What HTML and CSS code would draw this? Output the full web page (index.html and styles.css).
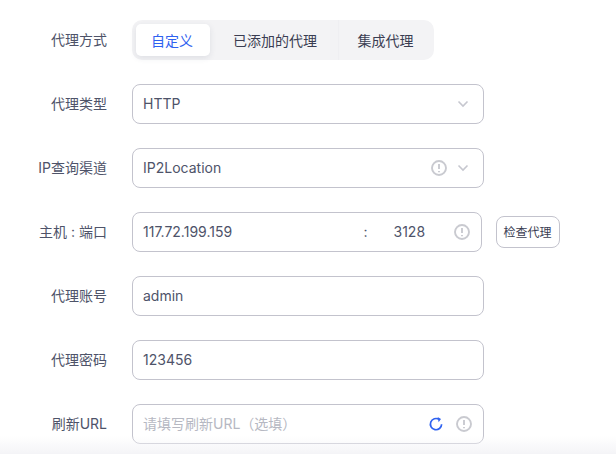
FILE: index.html
```html
<!DOCTYPE html>
<html lang="zh">
<head>
<meta charset="utf-8">
<title>代理设置</title>
<link rel="stylesheet" href="styles.css">
</head>
<body>
<form class="form">
  <div class="row">
    <span class="label">代理方式</span>
    <div class="tabs">
      <span class="tab tab-active">自定义</span>
      <span class="tab tab-wide">已添加的代理</span>
      <span class="tab tab-last">集成代理</span>
    </div>
  </div>
  <div class="row">
    <span class="label">代理类型</span>
    <div class="field"><span class="value">HTTP</span>
      <svg class="chevron" viewBox="0 0 12 8"><path d="M1.5 1.5 6 6l4.5-4.5"/></svg>
    </div>
  </div>
  <div class="row">
    <span class="label">IP查询渠道</span>
    <div class="field"><span class="value">IP2Location</span>
      <svg class="info" viewBox="0 0 16 16"><circle cx="8" cy="8" r="7"/><path d="M8 4v5M8 11v1.2"/></svg>
      <svg class="chevron" viewBox="0 0 12 8"><path d="M1.5 1.5 6 6l4.5-4.5"/></svg>
    </div>
  </div>
  <div class="row">
    <span class="label">主机 : 端口</span>
    <div class="field field-host">
      <span class="host">117.72.199.159</span>
      <span class="colon">:</span>
      <span class="port">3128</span>
      <svg class="info" viewBox="0 0 16 16"><circle cx="8" cy="8" r="7"/><path d="M8 4v5M8 11v1.2"/></svg>
    </div>
    <button type="button" class="check">检查代理</button>
  </div>
  <div class="row">
    <span class="label">代理账号</span>
    <div class="field"><span class="value">admin</span></div>
  </div>
  <div class="row">
    <span class="label">代理密码</span>
    <div class="field"><span class="value">123456</span></div>
  </div>
  <div class="row">
    <span class="label">刷新URL</span>
    <div class="field field-url"><span class="value placeholder">请填写刷新URL（选填）</span>
      <svg class="refresh" viewBox="0 0 16 16"><path d="M13.6 8.2A5.6 5.6 0 1 1 11 3.4"/><path class="arrow" d="M9.6 1 13 3.1 10.6 6.2z"/></svg>
      <svg class="info" viewBox="0 0 16 16"><circle cx="8" cy="8" r="7"/><path d="M8 4v5M8 11v1.2"/></svg>
    </div>
  </div>
</form>
<div class="fade"></div>
</body>
</html>
```
FILE: styles.css
```css
* { box-sizing: border-box; }
html, body { margin: 0; height: 100%; overflow: hidden; }
body {
  background: #fff;
  color: #4e5369;
  font-family: Inter, "Noto Sans CJK SC", sans-serif;
  font-size: 14px;
  position: relative;
}
.form {
  display: flex;
  flex-direction: column;
  gap: 24px;
  padding: 20px 0 0 0;
}
.row {
  display: flex;
  align-items: center;
  height: 40px;
}
.label {
  width: 107px;
  margin-right: 24.5px;
  padding-bottom: 2px;
  flex: none;
  text-align: right;
  color: #4e5369;
  font-size: 14px;
  white-space: nowrap;
}
.tabs {
  display: flex;
  align-items: stretch;
  height: 40px;
  width: 302px;
  background: #f3f3f5;
  border-radius: 10px;
  color: #3a3d52;
}
.tab {
  display: flex;
  align-items: center;
  justify-content: center;
  padding-bottom: 1px;
  font-size: 14px;
}
.tab-active {
  width: 74px;
  height: 32px;
  margin: 4px 0 4px 4px;
  padding-right: 1px;
  background: #fff;
  border-radius: 5px;
  color: #2f62f0;
  box-shadow: 0 2px 6px rgba(40, 45, 80, 0.1);
}
.tab-wide { width: 128px; padding-left: 3px; }
.tab-last {
  width: 96px;
  padding-right: 1px;
  border-left: 1px solid #efeff2;
}
.field {
  display: flex;
  align-items: center;
  width: 352.5px;
  height: 40px;
  padding: 0 12px 0 10.5px;
  border: 1px solid #c3c3cd;
  border-radius: 8px;
  background: #fff;
  font-size: 14px;
  color: #4e5369;
}
.value { flex: 1; white-space: nowrap; padding-bottom: 2px; }
.placeholder { color: #b6b8c2; }
.chevron {
  width: 12px;
  height: 8px;
  margin-left: 10px;
  margin-right: 2px;
  fill: none;
  stroke: #c6c7cf;
  stroke-width: 1.6;
}
.info {
  width: 16px;
  height: 16px;
  fill: none;
  stroke: #c9cad0;
  stroke-width: 1.9;
}
.field-host {
  width: 350.5px;
  margin-right: 13.5px;
  padding-right: 11px;
}
.host { width: 220.5px; flex: none; padding-bottom: 2px; }
.colon { width: 30px; flex: none; padding-bottom: 2px; }
.port { flex: 1; padding-bottom: 2px; }
.field-url { padding-right: 11px; }
.check {
  width: 64px;
  height: 32px;
  padding: 0 0 1px;
  border: 1px solid #c3c3cd;
  border-radius: 8px;
  background: #fff;
  color: #3a3d52;
  font: inherit;
  font-size: 12px;
}
.refresh {
  width: 16px;
  height: 16px;
  margin-right: 12px;
  fill: none;
  stroke: #2f62f0;
  stroke-width: 1.7;
}
.refresh .arrow { fill: #2f62f0; stroke: none; }
.fade {
  position: absolute;
  left: 0;
  right: 0;
  bottom: 0;
  height: 18px;
  background: linear-gradient(rgba(244, 244, 247, 0), #f4f4f7);
  pointer-events: none;
}
```
